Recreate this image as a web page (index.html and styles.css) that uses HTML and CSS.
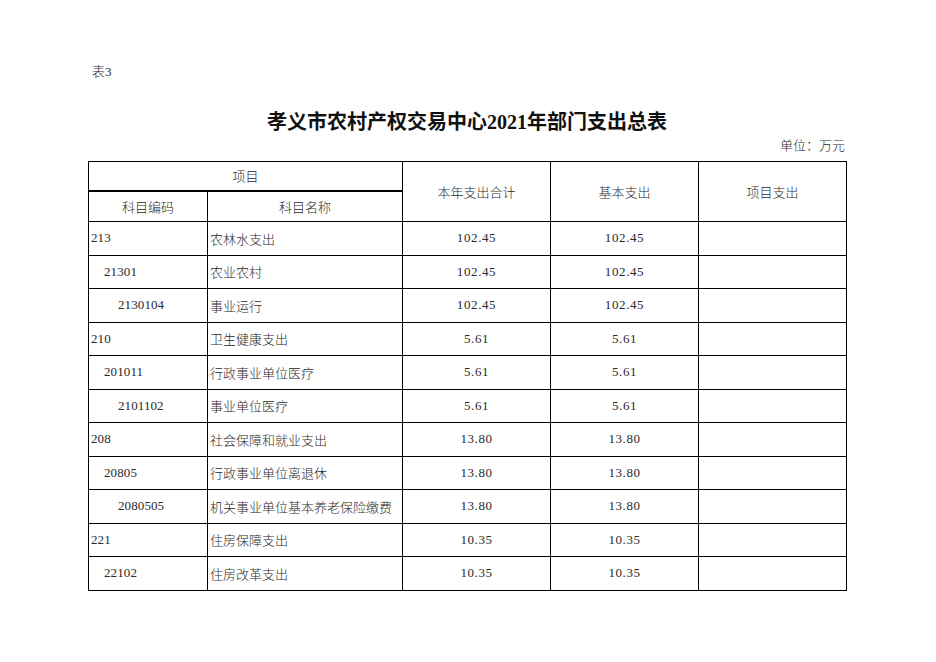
FILE: index.html
```html
<!DOCTYPE html>
<html lang="zh-CN">
<head>
<meta charset="utf-8">
<title>孝义市农村产权交易中心2021年部门支出总表</title>
<link rel="stylesheet" href="styles.css">
</head>
<body>
<div class="sheet">
  <div class="tag">表3</div>
  <h1 class="title">孝义市农村产权交易中心2021年部门支出总表</h1>
  <div class="unit">单位：万元</div>
  <table class="grid">
    <colgroup>
      <col class="c-code">
      <col class="c-name">
      <col class="c-num">
      <col class="c-num">
      <col class="c-num">
    </colgroup>
    <thead>
      <tr class="h1">
        <th colspan="2" class="group">项目</th>
        <th rowspan="2">本年支出合计</th>
        <th rowspan="2">基本支出</th>
        <th rowspan="2">项目支出</th>
      </tr>
      <tr class="h2">
        <th>科目编码</th>
        <th>科目名称</th>
      </tr>
    </thead>
    <tbody>
      <tr><td class="code l0">213</td><td class="name">农林水支出</td><td class="num">102.45</td><td class="num">102.45</td><td class="num"></td></tr>
      <tr><td class="code l1">21301</td><td class="name">农业农村</td><td class="num">102.45</td><td class="num">102.45</td><td class="num"></td></tr>
      <tr><td class="code l2">2130104</td><td class="name">事业运行</td><td class="num">102.45</td><td class="num">102.45</td><td class="num"></td></tr>
      <tr><td class="code l0">210</td><td class="name">卫生健康支出</td><td class="num">5.61</td><td class="num">5.61</td><td class="num"></td></tr>
      <tr><td class="code l1">201011</td><td class="name">行政事业单位医疗</td><td class="num">5.61</td><td class="num">5.61</td><td class="num"></td></tr>
      <tr><td class="code l2">2101102</td><td class="name">事业单位医疗</td><td class="num">5.61</td><td class="num">5.61</td><td class="num"></td></tr>
      <tr><td class="code l0">208</td><td class="name">社会保障和就业支出</td><td class="num">13.80</td><td class="num">13.80</td><td class="num"></td></tr>
      <tr><td class="code l1">20805</td><td class="name">行政事业单位离退休</td><td class="num">13.80</td><td class="num">13.80</td><td class="num"></td></tr>
      <tr><td class="code l2">2080505</td><td class="name">机关事业单位基本养老保险缴费</td><td class="num">13.80</td><td class="num">13.80</td><td class="num"></td></tr>
      <tr><td class="code l0">221</td><td class="name">住房保障支出</td><td class="num">10.35</td><td class="num">10.35</td><td class="num"></td></tr>
      <tr><td class="code l1">22102</td><td class="name">住房改革支出</td><td class="num">10.35</td><td class="num">10.35</td><td class="num"></td></tr>
    </tbody>
  </table>
</div>
</body>
</html>
```

FILE: styles.css
```css
html, body {
  margin: 0;
  padding: 0;
  background: #ffffff;
}

body {
  font-family: "Liberation Serif", "Noto Sans CJK SC", serif;
  font-size: 13px;
  color: #2a2a2a;
}

.sheet {
  width: 758px;
  margin-left: 88px;
  padding-top: 64px;
}

.tag {
  height: 16px;
  line-height: 16px;
  padding-left: 4px;
  font-weight: 300;
}

.title {
  margin: 28px 0 0 0;
  height: 28px;
  line-height: 28px;
  font-size: 20px;
  font-weight: 700;
  text-align: center;
  color: #111111;
}

.unit {
  margin-top: 2px;
  height: 16px;
  line-height: 16px;
  text-align: right;
  padding-right: 1px;
  font-weight: 300;
}

.grid {
  margin-top: 7px;
  width: 759px;
  border-collapse: collapse;
  table-layout: fixed;
  font-weight: 300;
}

.c-code { width: 119px; }
.c-name { width: 195px; }
.c-num  { width: 148px; }

.grid th,
.grid td {
  border: 1px solid #000000;
  padding: 0;
  font-weight: 300;
  white-space: nowrap;
  overflow: hidden;
}

.grid th {
  text-align: center;
  vertical-align: middle;
}

.h1 { height: 29px; }
.h2 { height: 31px; }

.grid th.group {
  border-bottom: 2px solid #000000;
}

.grid tbody tr { height: 33.5px; }

.grid td.code {
  padding-left: 2px;
  letter-spacing: 0.1px;
}
.grid td.code.l1 { padding-left: 15px; }
.grid td.code.l2 { padding-left: 29px; }
.grid td.name { padding-left: 2px; }

.grid td.num {
  text-align: center;
  letter-spacing: 0.6px;
}
```
